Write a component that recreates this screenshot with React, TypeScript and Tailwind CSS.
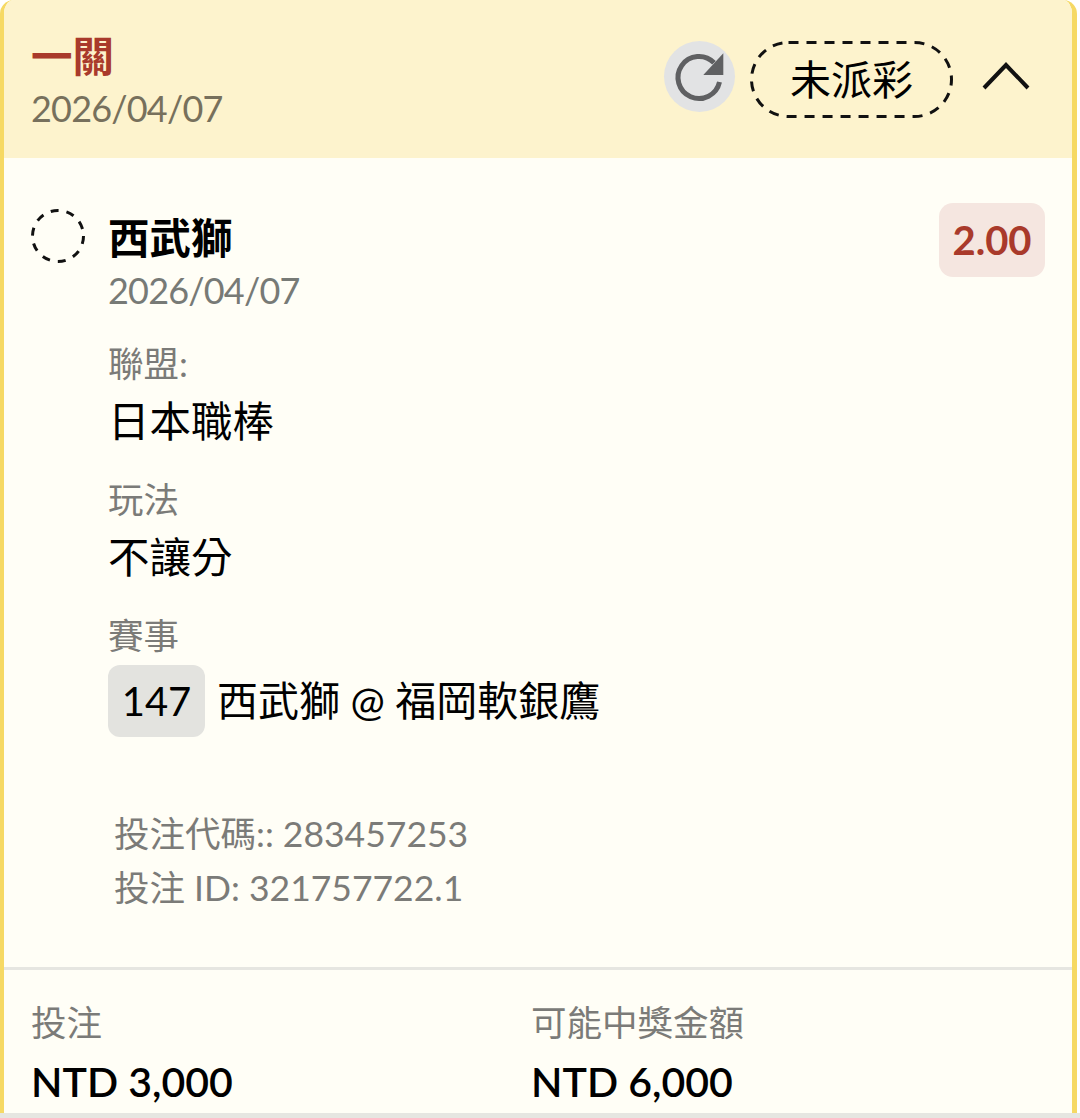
import React from 'react';

const fontStack = 'font-[Lato,"Noto_Sans_CJK_TC",sans-serif]';

const DetailRow: React.FC<{ label: string; children: React.ReactNode }> = ({ label, children }) => (
  <div className="flex flex-col">
    <div className="h-[44px] text-[35.5px] leading-[44px] text-[#7b7b78]">{label}</div>
    <div className="mt-[5px] text-[41.5px] leading-[60px] text-black">{children}</div>
  </div>
);

export default function App() {
  return (
    <div className={`h-[1118px] w-[1080px] overflow-hidden bg-white ${fontStack}`}>
      <div className="h-[1113px] w-[1077px] overflow-hidden rounded-t-[14px] border-l-[4px] border-r-[5px] border-[#f6d964] bg-[#fffef6]">
        {/* header */}
        <div className="flex h-[158px] items-start justify-between bg-[#fdf3cd] pl-[27px] pr-[42px]">
          <div className="pt-[30px]">
            <div className="text-[41.5px] leading-[52px] font-bold text-[#a93a2b]">一關</div>
            <div className="mt-[3px] text-[36px] leading-[46px] tracking-[-0.8px] text-[#77705c]">2026/04/07</div>
          </div>
          <div className="flex items-start pt-[41px]">
            <div className="flex h-[71px] w-[71px] items-center justify-center rounded-full bg-[#e2e3e4]">
              <svg viewBox="0 0 71 71" className="h-[71px] w-[71px]">
                <path d="M50 21.8A21 21 0 1 0 55.5 41" fill="none" stroke="#5f6062" strokeWidth="5" />
                <path d="M59.3 12.3V34H39.3z" fill="#5f6062" />
              </svg>
            </div>
            <div className="relative ml-[15px] flex h-[77px] w-[203px] items-center justify-center text-[41px] text-black">
              <svg viewBox="0 0 203 77" className="absolute inset-0 h-full w-full">
                <rect x="1.5" y="1.5" width="200" height="74" rx="37" fill="none" stroke="#111" strokeWidth="3" strokeDasharray="10 8" />
              </svg>
              未派彩
            </div>
            <svg viewBox="0 0 48 28" className="ml-[29px] mt-[21px] h-[28px] w-[48px]">
              <path d="M2 26 24 3l22 23" fill="none" stroke="#111" strokeWidth="4" />
            </svg>
          </div>
        </div>

        {/* selection */}
        <div className="flex h-[809px] flex-col pl-[27px] pr-[27px]">
          <div className="flex items-start pt-[45px]">
            <svg viewBox="0 0 54 54" className="mt-[6px] h-[54px] w-[54px] shrink-0">
              <circle cx="27" cy="27" r="25.5" fill="none" stroke="#111" strokeWidth="3" strokeDasharray="8 8" />
            </svg>
            <div className="ml-[23px] flex-1">
              <div className="mt-[3px] text-[41.5px] leading-[64px] font-bold text-black">西武獅</div>
              <div className="text-[36px] leading-[40px] tracking-[-0.8px] text-[#777a76]">2026/04/07</div>
            </div>
            <div className="flex h-[74px] w-[106px] items-center justify-center rounded-[14px] bg-[#f5e6e0] text-[40px] font-bold text-[#a93a2b]">
              2.00
            </div>
          </div>

          <div className="ml-[77px] mt-[32px] flex flex-col gap-[27px]">
            <DetailRow label="聯盟:">日本職棒</DetailRow>
            <DetailRow label="玩法">不讓分</DetailRow>
            <div className="flex flex-col">
              <div className="h-[44px] text-[35.5px] leading-[44px] text-[#7b7b78]">賽事</div>
              <div className="mt-[7px] flex items-center text-[41px] text-black">
                <span className="flex h-[72px] w-[97px] items-center justify-center rounded-[12px] bg-[#e3e3df] text-[40px]">147</span>
                <span className="ml-[12px]">西武獅 @ 福岡軟銀鷹</span>
              </div>
            </div>
            <div className="ml-[6px] mt-[43px] text-[35.5px] leading-[54px] text-[#7b7b78]">
              <div>投注代碼:: 283457253</div>
              <div>投注 ID: 321757722.1</div>
            </div>
          </div>
        </div>

        {/* totals */}
        <div className="grid h-[146px] grid-cols-[500px_1fr] border-t-[3px] border-[#e6e6e1] pl-[27px] pt-[30px]">
          <div>
            <div className="text-[35.5px] leading-[46px] text-[#7b7b78]">投注</div>
            <div className="mt-[11px] text-[41px] leading-[50px] font-semibold text-black">NTD 3,000</div>
          </div>
          <div>
            <div className="text-[35.5px] leading-[46px] text-[#7b7b78]">可能中獎金額</div>
            <div className="mt-[11px] text-[41px] leading-[50px] font-semibold text-black">NTD 6,000</div>
          </div>
        </div>
      </div>
      <div className="h-[5px] bg-[#e6e6e1]" />
    </div>
  );
}
